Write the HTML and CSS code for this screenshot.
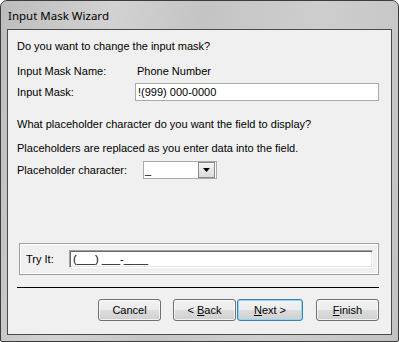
FILE: index.html
```html
<!DOCTYPE html>
<html lang="en">
  <head>
    <meta charset="UTF-8" />
    <title>Input Mask Wizard</title>
    <link rel="stylesheet" href="styles.css">
  </head>
  <body>
    <div class="vindue">
      <div class="titel">Input Mask Wizard</div>
      <div class="indhold">
        <p class="spoergsmaal">Do you want to change the input mask?</p>

        <div class="raekke navn">
          <span class="etiket">Input Mask Name:</span>
          <span class="vaerdi">Phone Number</span>
        </div>

        <div class="raekke maske">
          <span class="etiket">Input Mask:</span>
          <div class="felt bred">!(999) 000-0000</div>
        </div>

        <p class="spoergsmaal q2">What placeholder character do you want the field to display?</p>
        <p class="spoergsmaal q3">Placeholders are replaced as you enter data into the field.</p>

        <div class="raekke pladsholder">
          <span class="etiket">Placeholder character:</span>
          <div class="combo">
            <span class="combo-tekst">_</span>
            <span class="pil">
              <svg width="7" height="4" viewBox="0 0 7 4"><path d="M0 0h7L3.5 4z" fill="#000"/></svg>
            </span>
          </div>
        </div>

        <!-- proev masken -->
        <div class="gruppe">
          <span class="proev-etiket">Try It:</span>
          <div class="proev-felt">(___) ___-____</div>
        </div>

        <div class="streg"></div>

        <div class="knapper">
          <button class="knap annuller">Cancel</button>
          <button class="knap tilbage">&lt; <u>B</u>ack</button>
          <button class="knap naeste"><u>N</u>ext &gt;</button>
          <button class="knap afslut"><u>F</u>inish</button>
        </div>
      </div>
    </div>
  </body>
</html>
```

FILE: styles.css
```css
* {
  padding: 0;
  margin: 0;
  box-sizing: border-box;
}

body {
  background-color: #ffffff;
  font-family: "Liberation Sans", Arial, sans-serif;
  font-size: 11px;
  color: #000;
}

.vindue {
  width: 399px;
  height: 342px;
  border: 1px solid #3c3c3c;
  border-radius: 7px 7px 2px 2px;
  background: linear-gradient(100deg, #bdbdbd 0%, #d2d2d2 25%, #c4c4c4 45%, #cecece 70%, #c2c2c2 100%);
  padding: 0 6px 6px 6px;
  display: flex;
  flex-direction: column;
}

.titel {
  height: 28px;
  padding: 7px 0 0 1px;
  font-family: "Noto Sans", sans-serif;
  font-size: 11.5px;
  color: #000;
}

.indhold {
  flex: 1;
  background-color: #f0f0f0;
  border: 1px solid #4a4a4a;
  padding: 0 12px 0 9px;
}

p {
  line-height: 13px;
  height: 13px;
}

.spoergsmaal {
  margin-top: 10px;
}

.raekke {
  display: flex;
  align-items: center;
}

.etiket {
  width: 118px;
}

.navn {
  margin-top: 11px;
  height: 13px;
}

.vaerdi {
  margin-left: 2px;
}

.maske {
  margin-top: 6px;
  height: 18px;
}

.felt {
  height: 18px;
  border: 1px solid #a9a9a9;
  background-color: #fff;
  padding: 1px 0 0 2px;
  line-height: 14px;
}

.bred {
  flex: 1;
}

.q2 {
  margin-top: 17px;
}

.q3 {
  margin-top: 11px;
}

.pladsholder {
  margin-top: 6px;
  height: 18px;
}

.pladsholder .etiket {
  width: 126px;
}

.combo {
  width: 74px;
  height: 18px;
  border: 1px solid #a9a9a9;
  background-color: #fff;
  display: flex;
  align-items: stretch;
  justify-content: space-between;
}

.combo-tekst {
  padding: 1px 0 0 1px;
  line-height: 14px;
}

.pil {
  width: 17px;
  margin: 0 1px 0 0;
  border: 1px solid #8a8a8a;
  background: linear-gradient(#f4f4f4, #dcdcdc);
  display: flex;
  align-items: center;
  justify-content: center;
}

/* proev-gruppen */

.gruppe {
  margin: 64px 0 0 2px;
  height: 32px;
  border: 1px solid #a0a0a0;
  box-shadow: inset 0 0 0 1px #ffffff;
  display: flex;
  align-items: center;
  padding: 0 5px 0 6px;
}

.proev-etiket {
  width: 43px;
}

.proev-felt {
  flex: 1;
  height: 18px;
  background-color: #fff;
  border-top: 1px solid #a0a0a0;
  border-left: 1px solid #a0a0a0;
  border-right: 1px solid #ffffff;
  border-bottom: 1px solid #ffffff;
  box-shadow: inset 1px 1px 0 #696969, inset -1px -1px 0 #e3e3e3;
  padding: 1px 0 0 3px;
  line-height: 14px;
}

.streg {
  margin-top: 12px;
  height: 1px;
  background-color: #000;
}

/* knapper */

.knapper {
  margin-top: 11px;
  display: flex;
  justify-content: flex-end;
}

.knap {
  width: 63px;
  height: 22px;
  border: 1px solid #707070;
  border-radius: 3px;
  background: linear-gradient(#f2f2f2 0%, #ebebeb 50%, #dddddd 51%, #cfcfcf 100%);
  box-shadow: inset 0 0 0 1px rgba(255, 255, 255, 0.7);
  font-family: "Liberation Sans", Arial, sans-serif;
  font-size: 11px;
  color: #000;
}

.tilbage {
  margin-left: 12px;
}

.naeste {
  width: 66px;
  margin-left: 1px;
  border-color: #3c7fb1;
  box-shadow: inset 0 0 0 1px #8fd7f7;
}

.afslut {
  margin-left: 13px;
}
```
